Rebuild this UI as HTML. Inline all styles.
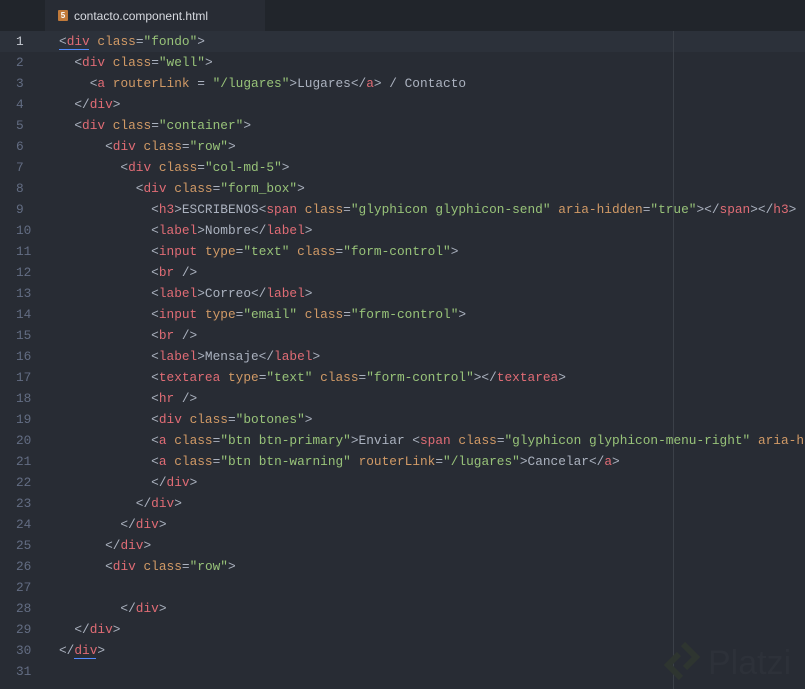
<!DOCTYPE html>
<html><head><meta charset="utf-8"><style>
body{margin:0;width:805px;height:689px;background:#282c34;overflow:hidden;position:relative;font-family:"Liberation Mono",monospace;}
.tabbar{position:absolute;left:0;top:0;width:805px;height:31px;background:#21252b;}
.tab{position:absolute;left:45px;top:0;width:220px;height:31px;background:#282c34;}
.tab span{position:absolute;left:29px;top:9px;font:12px "Liberation Sans",sans-serif;color:#d7dae0;}
.ic{position:absolute;left:13px;top:10px;width:10px;height:11px;background:#c17a3a;border-radius:1px;color:#fff;font:bold 8px "Liberation Sans";text-align:center;line-height:11px;}
.cur{position:absolute;left:0;top:31px;width:805px;height:21px;background:#2c313a;}
.guide{position:absolute;left:673px;top:31px;width:1px;height:658px;background:#3b4048;}
.code{position:absolute;left:0;top:31px;font-size:12.8px;line-height:21px;white-space:pre;color:#abb2bf;}
.ln{display:inline-block;width:59px;color:#636d83;text-indent:16px;}
.ln.a{color:#c8ccd4}
.t{color:#e06c75}.a{color:#d19a66}.s{color:#98c379}.p{color:#abb2bf}
.u{position:absolute;left:59px;top:49px;width:30px;height:1px;background:#528bff;}
.u2{position:absolute;left:74px;top:658px;width:22px;height:1px;background:#528bff;}
.logo{position:absolute;left:708px;top:644px;font:34px "Liberation Sans",sans-serif;color:#2d3139;}
</style></head><body>
<div class="tabbar"><div class="tab"><div class="ic">5</div><span>contacto.component.html</span></div></div>
<div class="cur"></div>
<div class="guide"></div>
<div class="code"><span class="ln a">1</span>&lt;<span class="t">div</span> <span class="a">class</span>=<span class="s">"fondo"</span>&gt;
<span class="ln">2</span>  &lt;<span class="t">div</span> <span class="a">class</span>=<span class="s">"well"</span>&gt;
<span class="ln">3</span>    &lt;<span class="t">a</span> <span class="a">routerLink</span> = <span class="s">"/lugares"</span>&gt;Lugares&lt;/<span class="t">a</span>&gt; / Contacto
<span class="ln">4</span>  &lt;/<span class="t">div</span>&gt;
<span class="ln">5</span>  &lt;<span class="t">div</span> <span class="a">class</span>=<span class="s">"container"</span>&gt;
<span class="ln">6</span>      &lt;<span class="t">div</span> <span class="a">class</span>=<span class="s">"row"</span>&gt;
<span class="ln">7</span>        &lt;<span class="t">div</span> <span class="a">class</span>=<span class="s">"col-md-5"</span>&gt;
<span class="ln">8</span>          &lt;<span class="t">div</span> <span class="a">class</span>=<span class="s">"form_box"</span>&gt;
<span class="ln">9</span>            &lt;<span class="t">h3</span>&gt;ESCRIBENOS&lt;<span class="t">span</span> <span class="a">class</span>=<span class="s">"glyphicon glyphicon-send"</span> <span class="a">aria-hidden</span>=<span class="s">"true"</span>&gt;&lt;/<span class="t">span</span>&gt;&lt;/<span class="t">h3</span>&gt;
<span class="ln">10</span>            &lt;<span class="t">label</span>&gt;Nombre&lt;/<span class="t">label</span>&gt;
<span class="ln">11</span>            &lt;<span class="t">input</span> <span class="a">type</span>=<span class="s">"text"</span> <span class="a">class</span>=<span class="s">"form-control"</span>&gt;
<span class="ln">12</span>            &lt;<span class="t">br</span> /&gt;
<span class="ln">13</span>            &lt;<span class="t">label</span>&gt;Correo&lt;/<span class="t">label</span>&gt;
<span class="ln">14</span>            &lt;<span class="t">input</span> <span class="a">type</span>=<span class="s">"email"</span> <span class="a">class</span>=<span class="s">"form-control"</span>&gt;
<span class="ln">15</span>            &lt;<span class="t">br</span> /&gt;
<span class="ln">16</span>            &lt;<span class="t">label</span>&gt;Mensaje&lt;/<span class="t">label</span>&gt;
<span class="ln">17</span>            &lt;<span class="t">textarea</span> <span class="a">type</span>=<span class="s">"text"</span> <span class="a">class</span>=<span class="s">"form-control"</span>&gt;&lt;/<span class="t">textarea</span>&gt;
<span class="ln">18</span>            &lt;<span class="t">hr</span> /&gt;
<span class="ln">19</span>            &lt;<span class="t">div</span> <span class="a">class</span>=<span class="s">"botones"</span>&gt;
<span class="ln">20</span>            &lt;<span class="t">a</span> <span class="a">class</span>=<span class="s">"btn btn-primary"</span>&gt;Enviar &lt;<span class="t">span</span> <span class="a">class</span>=<span class="s">"glyphicon glyphicon-menu-right"</span> <span class="a">aria-h</span>
<span class="ln">21</span>            &lt;<span class="t">a</span> <span class="a">class</span>=<span class="s">"btn btn-warning"</span> <span class="a">routerLink</span>=<span class="s">"/lugares"</span>&gt;Cancelar&lt;/<span class="t">a</span>&gt;
<span class="ln">22</span>            &lt;/<span class="t">div</span>&gt;
<span class="ln">23</span>          &lt;/<span class="t">div</span>&gt;
<span class="ln">24</span>        &lt;/<span class="t">div</span>&gt;
<span class="ln">25</span>      &lt;/<span class="t">div</span>&gt;
<span class="ln">26</span>      &lt;<span class="t">div</span> <span class="a">class</span>=<span class="s">"row"</span>&gt;
<span class="ln">27</span>
<span class="ln">28</span>        &lt;/<span class="t">div</span>&gt;
<span class="ln">29</span>  &lt;/<span class="t">div</span>&gt;
<span class="ln">30</span>&lt;/<span class="t">div</span>&gt;
<span class="ln">31</span></div>
<div class="u"></div><div class="u2"></div>
<svg style="position:absolute;left:664px;top:640px" width="38" height="42" viewBox="0 0 38 42"><path d="M19 4 L32 17 L21 28 M17 38 L4 25 L15 14" fill="none" stroke="#2e3530" stroke-width="6"/></svg>
<div class="logo">Platzi</div>
</body></html>
